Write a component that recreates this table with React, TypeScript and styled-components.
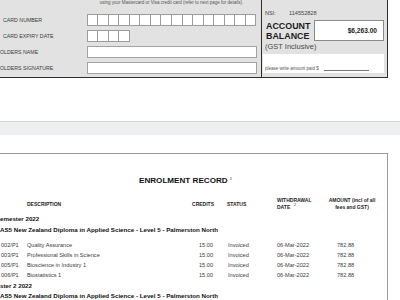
import React from "react";
import styled, { createGlobalStyle } from "styled-components";

const Global = createGlobalStyle`
  html, body { margin: 0; padding: 0; background: #fff; }
  body {
    width: 400px; height: 300px; overflow: hidden;
    font-family: "Liberation Sans", Arial, Helvetica, sans-serif;
  }
  * { box-sizing: border-box; }
`;

const Viewer = styled.div`
  width: 400px;
  height: 300px;
  overflow: hidden;
  background: #fff;
  display: flex;
  flex-direction: column;
`;

const Page = styled.section<{ $h?: number }>`
  flex: ${(p) => (p.$h ? "none" : "1")};
  height: ${(p) => (p.$h ? `${p.$h}px` : "auto")};
  background: #fff;
  overflow: hidden;
`;

const PageGap = styled.div`
  flex: none;
  height: 14px;
  background: #eeeff1;
  border-top: 1px solid #d5d5d8;
`;

const Doc = styled.div`
  margin-left: -20px;
  width: 408px;
`;

/* ---------- payment form panel ---------- */

const FormPanel = styled.div`
  display: grid;
  grid-template-columns: 281px 127px;
  height: 78px;
  border-bottom: 1px solid #2e2e2e;
`;

const CardForm = styled.div`
  background: #e2e2e2;
  padding: 0 4.5px 0 2px;
  display: flex;
  flex-direction: column;
`;

const Caption = styled.div`
  padding-left: 104.5px;
  text-align: center;
  font-size: 4.5px;
  line-height: 6px;
  color: #555;
  white-space: nowrap;
`;

const FieldList = styled.div`
  margin-top: 8px;
  display: flex;
  flex-direction: column;
  gap: 4px;
`;

const FieldRow = styled.div`
  display: grid;
  grid-template-columns: 104.5px 170px;
  height: 12px;
  align-items: center;
`;

const FieldLabel = styled.span<{ $indent: number }>`
  padding-left: ${(p) => p.$indent}px;
  font-size: 5.25px;
  color: #3a3a3a;
  white-space: nowrap;
`;

const DigitBoxes = styled.div<{ $count: number }>`
  display: grid;
  grid-template-columns: repeat(${(p) => p.$count}, 1fr);
  gap: 1px;
  padding: 1px;
  background: #9c9c9c;
  width: ${(p) => p.$count * 10.56 + 1}px;
  height: 12px;
`;

const Digit = styled.span`
  background: #fff;
`;

const TextField = styled.div`
  height: 12px;
  background: #fff;
  border: 1px solid #a2a2a2;
`;

const BalancePanel = styled.div`
  background: #e2e2e2;
  border-left: 1px solid #2e2e2e;
  border-right: 1px solid #2e2e2e;
  padding: 10px 3px 3px 1px;
  display: flex;
  flex-direction: column;
`;

const NsiLine = styled.div`
  display: flex;
  padding-left: 2px;
  font-size: 5.6px;
  line-height: 6px;
  color: #444;
`;

const NsiLabel = styled.span`
  width: 24px;
`;

const BalanceRow = styled.div`
  margin-top: 4px;
  height: 21px;
  display: flex;
  align-items: center;
  justify-content: space-between;
`;

const BalanceLabel = styled.div`
  padding-left: 3px;
  font-size: 8.9px;
  line-height: 10px;
  font-weight: 700;
  color: #1c1c1c;
`;

const BalanceBox = styled.div`
  width: 70px;
  height: 21px;
  background: #fff;
  border: 1px solid #8a8a8a;
  display: flex;
  align-items: center;
  justify-content: flex-end;
  padding-right: 6px;
  font-size: 6.6px;
  font-weight: 700;
  color: #222;
`;

const GstLine = styled.div`
  margin-top: 2px;
  padding-left: 2px;
  font-size: 7.5px;
  line-height: 8px;
  color: #4a4a4a;
`;

const WriteBox = styled.div`
  margin-top: 3px;
  height: 19px;
  background: #fff;
  display: flex;
  align-items: flex-end;
  padding: 0 0 2px 2px;
  font-size: 4.5px;
  line-height: 5px;
  color: #555;
  white-space: nowrap;
`;

const WriteLine = styled.span`
  margin-left: 5px;
  width: 45px;
  border-bottom: 1px solid #777;
`;

/* ---------- enrolment record ---------- */

const RecordBox = styled.div`
  margin-top: 18px;
  border-top: 1px solid #9a9a9a;
  border-right: 1px solid #9a9a9a;
  height: 200px;
  padding-top: 21.5px;
  display: flex;
  flex-direction: column;
  color: #333;
`;

const RecordTitle = styled.h2`
  margin: 0;
  text-align: center;
  font-size: 8.1px;
  line-height: 9px;
  font-weight: 700;
  color: #111;
  padding-left: 4px;
`;

const Sup = styled.sup`
  font-size: 4.2px;
  line-height: 0;
  font-weight: 400;
  vertical-align: 3px;
  margin-left: 2px;
  color: #444;
`;

const TableRow = styled.div<{ $head?: boolean }>`
  display: grid;
  grid-template-columns: 27px 158px 42px 50px 49px 54px;
  padding-left: 20px;
  align-items: center;
  height: ${(p) => (p.$head ? 14 : 10)}px;
  margin-top: ${(p) => (p.$head ? 12.5 : 0)}px;
  font-size: ${(p) => (p.$head ? 5 : 5.6)}px;
  line-height: ${(p) => (p.$head ? 7 : 10)}px;
  font-weight: ${(p) => (p.$head ? 700 : 400)};
  color: ${(p) => (p.$head ? "#222" : "#3a3a3a")};
  white-space: nowrap;
`;

const Cell = styled.span<{ $align?: "left" | "right" | "center"; $pl?: number; $pr?: number }>`
  text-align: ${(p) => p.$align ?? "left"};
  padding-left: ${(p) => p.$pl ?? 0}px;
  padding-right: ${(p) => p.$pr ?? 0}px;
`;

const GroupHeading = styled.div<{ $mt: number }>`
  margin-top: ${(p) => p.$mt}px;
  padding-left: 20px;
  font-size: 6.2px;
  line-height: 8px;
  font-weight: 700;
  color: #111;
  white-space: nowrap;
`;

const CourseList = styled.div`
  margin-top: 6px;
  display: flex;
  flex-direction: column;
`;

const courses = [
  { code: "002/P1", name: "Quality Assurance" },
  { code: "003/P1", name: "Professional Skills in Science" },
  { code: "005/P1", name: "Bioscience in Industry 1" },
  { code: "006/P1", name: "Biostatistics 1" },
];

const programme =
  "AS5 New Zealand Diploma in Applied Science - Level 5 - Palmerston North";

export default function App() {
  return (
    <>
      <Global />
      <Viewer>
        <Page $h={121}>
          <Doc>
            <FormPanel>
              <CardForm>
                <Caption>
                  using your Mastercard or Visa credit card (refer to next page for details).
                </Caption>
                <FieldList>
                  <FieldRow>
                    <FieldLabel $indent={21}>CARD NUMBER</FieldLabel>
                    <DigitBoxes $count={16}>
                      {Array.from({ length: 16 }, (_, i) => (
                        <Digit key={i} />
                      ))}
                    </DigitBoxes>
                  </FieldRow>
                  <FieldRow>
                    <FieldLabel $indent={21}>CARD EXPIRY DATE</FieldLabel>
                    <DigitBoxes $count={4}>
                      {Array.from({ length: 4 }, (_, i) => (
                        <Digit key={i} />
                      ))}
                    </DigitBoxes>
                  </FieldRow>
                  <FieldRow>
                    <FieldLabel $indent={18}>OLDERS NAME</FieldLabel>
                    <TextField />
                  </FieldRow>
                  <FieldRow>
                    <FieldLabel $indent={18}>OLDERS SIGNATURE</FieldLabel>
                    <TextField />
                  </FieldRow>
                </FieldList>
              </CardForm>
              <BalancePanel>
                <NsiLine>
                  <NsiLabel>NSI:</NsiLabel>
                  <span>114552828</span>
                </NsiLine>
                <BalanceRow>
                  <BalanceLabel>
                    ACCOUNT
                    <br />
                    BALANCE
                  </BalanceLabel>
                  <BalanceBox>$6,263.00</BalanceBox>
                </BalanceRow>
                <GstLine>(GST Inclusive)</GstLine>
                <WriteBox>
                  please write amount paid $<WriteLine />
                </WriteBox>
              </BalancePanel>
            </FormPanel>
          </Doc>
        </Page>
        <PageGap />
        <Page>
          <Doc>
            <RecordBox>
              <RecordTitle>
                ENROLMENT RECORD<Sup>1</Sup>
              </RecordTitle>
              <TableRow $head>
                <Cell />
                <Cell>DESCRIPTION</Cell>
                <Cell $align="right" $pr={13}>CREDITS</Cell>
                <Cell>STATUS</Cell>
                <Cell>
                  WITHDRAWAL
                  <br />
                  DATE <Sup>2</Sup>
                </Cell>
                <Cell $align="center" $pr={2}>
                  AMOUNT (incl of all
                  <br />
                  fees and GST)
                </Cell>
              </TableRow>
              <GroupHeading $mt={4}>emester 2022</GroupHeading>
              <GroupHeading $mt={3}>{programme}</GroupHeading>
              <CourseList>
                {courses.map((c) => (
                  <TableRow key={c.code}>
                    <Cell $pl={1}>{c.code}</Cell>
                    <Cell>{c.name}</Cell>
                    <Cell $align="right" $pr={14}>15.00</Cell>
                    <Cell $pl={1}>Invoiced</Cell>
                    <Cell>06-Mar-2022</Cell>
                    <Cell $pl={11}>782.88</Cell>
                  </TableRow>
                ))}
              </CourseList>
              <GroupHeading $mt={2}>ster 2 2022</GroupHeading>
              <GroupHeading $mt={2}>{programme}</GroupHeading>
            </RecordBox>
          </Doc>
        </Page>
      </Viewer>
    </>
  );
}
